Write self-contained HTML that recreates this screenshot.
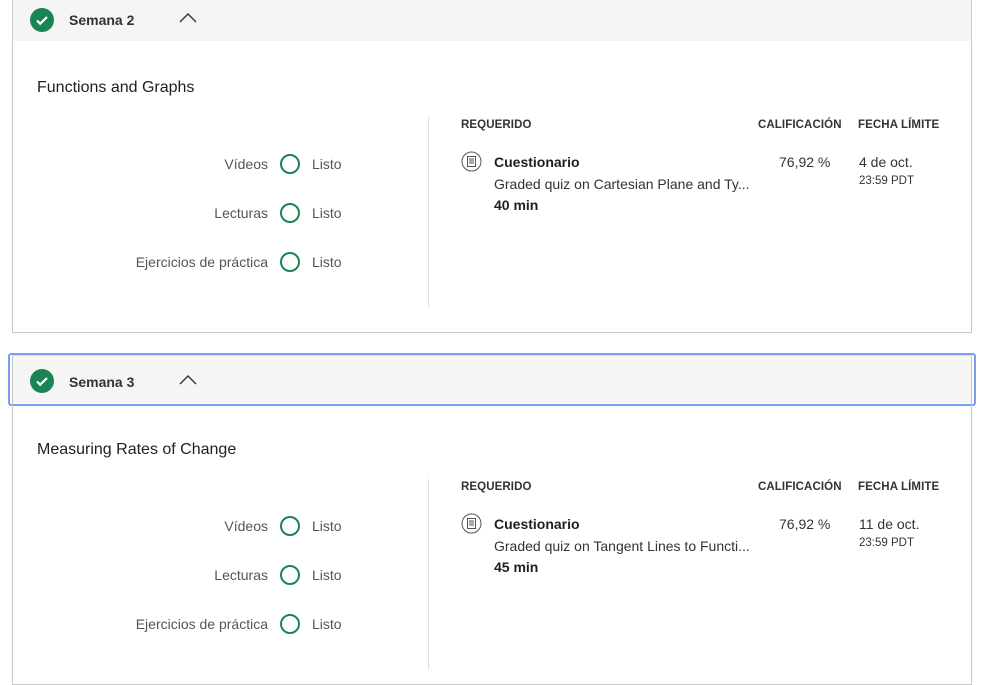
<!DOCTYPE html>
<html><head><meta charset="utf-8"><style>
*{box-sizing:border-box;margin:0;padding:0}
body{width:997px;height:672px;overflow:hidden;background:#fff;font-family:"Liberation Sans",sans-serif;color:#1f1f1f;position:relative}
.box{position:absolute;left:12px;width:960px;border:1px solid #c8c8c8;border-top:none}
.hdr{position:absolute;left:0;width:958px;height:41px;background:#f5f5f5}
.chk{position:absolute;left:17px;top:8px;width:24px;height:24px;border-radius:50%;background:#1a8553}
.wk{position:absolute;left:56px;top:12px;font-size:14px;font-weight:bold;color:#333}
.chev{position:absolute;left:166px;top:12px}
.title{position:absolute;left:24px;font-size:16px;color:#1f1f1f}
.div{position:absolute;left:415px;width:1px;background:#ddd}
.lab{position:absolute;font-size:14px;color:#555;text-align:right;width:200px}
.circ{position:absolute;left:267px;width:20px;height:20px;border:2px solid #1a8553;border-radius:50%}
.listo{position:absolute;left:299px;font-size:14px;color:#555}
.th{position:absolute;font-size:11.5px;font-weight:bold;color:#333;letter-spacing:.1px}
.t{position:absolute;font-size:14px}
</style></head><body>

<div class="box" style="top:0;height:333px">
 <div class="hdr" style="top:0"></div>
 <svg class="chk" style="top:8px" viewBox="0 0 24 24"><path d="M7 12.5l3.2 3.2L17 9" stroke="#fff" stroke-width="2.2" fill="none"/></svg>
 <div class="wk">Semana 2</div>
 <svg class="chev" width="18" height="12" viewBox="0 0 18 12"><path d="M1 10L9 2l8 8" stroke="#333" stroke-width="1.4" fill="none"/></svg>
 <div class="title" style="top:79px">Functions and Graphs</div>
 <div class="div" style="top:117px;height:190px"></div>
 <div class="lab" style="left:55px;top:156px">Vídeos</div><div class="circ" style="top:154px"></div><div class="listo" style="top:156px">Listo</div>
 <div class="lab" style="left:55px;top:205px">Lecturas</div><div class="circ" style="top:203px"></div><div class="listo" style="top:205px">Listo</div>
 <div class="lab" style="left:55px;top:254px">Ejercicios de práctica</div><div class="circ" style="top:252px"></div><div class="listo" style="top:254px">Listo</div>
 <div class="th" style="left:448px;top:119px">REQUERIDO</div>
 <div class="th" style="left:745px;top:119px">CALIFICACIÓN</div>
 <div class="th" style="left:845px;top:119px">FECHA LÍMITE</div>
 <svg style="position:absolute;left:448px;top:151px" width="21" height="21" viewBox="0 0 21 21"><circle cx="10.5" cy="10.5" r="9.5" stroke="#555" fill="none"/><rect x="6.5" y="5.5" width="8" height="10" stroke="#555" fill="none"/><path d="M8 8h5M8 10h5M8 12h5" stroke="#555"/></svg>
 <div class="t" style="left:481px;top:154px;font-weight:bold">Cuestionario</div>
 <div class="t" style="left:481px;top:176px;color:#333">Graded quiz on Cartesian Plane and Ty...</div>
 <div class="t" style="left:481px;top:197px;font-weight:bold">40 min</div>
 <div class="t" style="left:766px;top:154px;color:#333">76,92 %</div>
 <div class="t" style="left:846px;top:154px;color:#333">4 de oct.</div>
 <div class="t" style="left:846px;top:175px;font-size:11.5px;color:#333">23:59 PDT</div>
</div>

<div style="position:absolute;left:8px;top:353px;width:968px;height:53px;border:2px solid #7b9ff0;border-radius:3px"></div>
<div class="box" style="top:355px;height:330px;border-top:1px solid #ddd">
 <div class="hdr" style="top:0;height:47px"></div>
 <svg class="chk" style="top:13px" viewBox="0 0 24 24"><path d="M7 12.5l3.2 3.2L17 9" stroke="#fff" stroke-width="2.2" fill="none"/></svg>
 <div class="wk" style="top:18px">Semana 3</div>
 <svg class="chev" style="top:18px" width="18" height="12" viewBox="0 0 18 12"><path d="M1 10L9 2l8 8" stroke="#333" stroke-width="1.4" fill="none"/></svg>
 <div class="title" style="top:85px">Measuring Rates of Change</div>
 <div class="div" style="top:123px;height:190px"></div>
 <div class="lab" style="left:55px;top:162px">Vídeos</div><div class="circ" style="top:160px"></div><div class="listo" style="top:162px">Listo</div>
 <div class="lab" style="left:55px;top:211px">Lecturas</div><div class="circ" style="top:209px"></div><div class="listo" style="top:211px">Listo</div>
 <div class="lab" style="left:55px;top:260px">Ejercicios de práctica</div><div class="circ" style="top:258px"></div><div class="listo" style="top:260px">Listo</div>
 <div class="th" style="left:448px;top:125px">REQUERIDO</div>
 <div class="th" style="left:745px;top:125px">CALIFICACIÓN</div>
 <div class="th" style="left:845px;top:125px">FECHA LÍMITE</div>
 <svg style="position:absolute;left:448px;top:157px" width="21" height="21" viewBox="0 0 21 21"><circle cx="10.5" cy="10.5" r="9.5" stroke="#555" fill="none"/><rect x="6.5" y="5.5" width="8" height="10" stroke="#555" fill="none"/><path d="M8 8h5M8 10h5M8 12h5" stroke="#555"/></svg>
 <div class="t" style="left:481px;top:160px;font-weight:bold">Cuestionario</div>
 <div class="t" style="left:481px;top:182px;color:#333">Graded quiz on Tangent Lines to Functi...</div>
 <div class="t" style="left:481px;top:203px;font-weight:bold">45 min</div>
 <div class="t" style="left:766px;top:160px;color:#333">76,92 %</div>
 <div class="t" style="left:846px;top:160px;color:#333">11 de oct.</div>
 <div class="t" style="left:846px;top:181px;font-size:11.5px;color:#333">23:59 PDT</div>
</div>
</body></html>
